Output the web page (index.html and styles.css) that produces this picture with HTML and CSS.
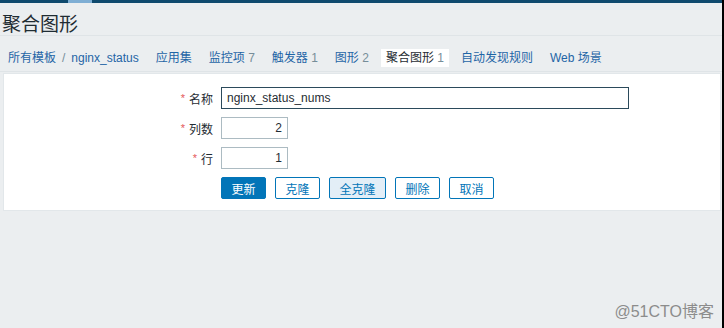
FILE: index.html
```html
<!DOCTYPE html>
<html lang="zh-CN">
<head>
    <meta charset="UTF-8">
    <meta name="viewport" content="width=device-width, initial-scale=1.0">
    <title>聚合图形</title>
    <link rel="stylesheet" href="styles.css">
</head>
<body>
    <div class="screen">
        <div class="topbar"><span class="topbar-mark"></span></div>

        <h1 class="title">聚合图形</h1>

        <ul class="nav">
            <li class="nav-item"><a href="#">所有模板</a><span class="crumb-sep">/</span><a href="#">nginx_status</a></li>
            <li class="nav-item"><a href="#">应用集</a></li>
            <li class="nav-item"><a href="#">监控项</a> <span class="count">7</span></li>
            <li class="nav-item"><a href="#">触发器</a> <span class="count">1</span></li>
            <li class="nav-item"><a href="#">图形</a> <span class="count">2</span></li>
            <li class="nav-item selected"><span>聚合图形</span> <span class="count">1</span></li>
            <li class="nav-item"><a href="#">自动发现规则</a></li>
            <li class="nav-item"><a href="#">Web 场景</a></li>
        </ul>

        <div class="panel">
            <form class="form">
                <label class="label" for="name"><span class="req">*</span>名称</label>
                <div class="field"><input class="input input-name" id="name" type="text" value="nginx_status_nums"></div>

                <label class="label" for="hsize"><span class="req">*</span>列数</label>
                <div class="field"><input class="input input-num" id="hsize" type="text" value="2"></div>

                <label class="label" for="vsize"><span class="req">*</span>行</label>
                <div class="field"><input class="input input-num" id="vsize" type="text" value="1"></div>

                <div class="buttons">
                    <button type="button" class="btn btn-main">更新</button>
                    <button type="button" class="btn">克隆</button>
                    <button type="button" class="btn btn-hover">全克隆</button>
                    <button type="button" class="btn">删除</button>
                    <button type="button" class="btn">取消</button>
                </div>
            </form>
        </div>

        <div class="watermark">@51CTO博客</div>
    </div>
</body>
</html>
```

FILE: styles.css
```css
html, body {
    margin: 0;
    padding: 0;
}

body {
    font-family: "Liberation Sans", "Noto Sans CJK SC", sans-serif;
    font-size: 12px;
    color: #1f2c33;
    background: #000;
}

.screen {
    position: relative;
    width: 722px;
    height: 328px;
    background: #ebeef0;
    overflow: hidden;
}

.topbar {
    height: 3px;
    background: #0f4a6e;
}

.topbar-mark {
    display: block;
    margin-left: 68px;
    width: 24px;
    height: 3px;
    background: #7eaed4;
}

.title {
    margin: 0;
    height: 33px;
    box-sizing: border-box;
    padding: 6px 0 0 2px;
    display: flex;
    align-items: center;
    font-size: 19px;
    font-weight: normal;
    color: #1f2c33;
    border-bottom: 1px solid #dfe4e7;
}

.nav {
    list-style: none;
    margin: 0;
    padding: 8px 0 0 3px;
    height: 36px;
    box-sizing: border-box;
    display: flex;
    align-items: center;
    border-bottom: 1px solid #dfe4e7;
}

.nav-item {
    padding: 0 5px;
    margin-right: 7px;
    line-height: 18px;
    white-space: nowrap;
}

.nav-item a {
    color: #1f65a6;
    text-decoration: none;
}

.nav-item .count {
    color: #768d99;
}

.crumb-sep {
    color: #768d99;
    margin: 0 6px;
}

.nav-item.selected {
    background: #fff;
    color: #1f2c33;
}

.panel {
    margin: 1px 1px 0 3px;
    background: #fff;
    border: 1px solid #e2e7ea;
}

.form {
    display: grid;
    grid-template-columns: 209px auto;
    column-gap: 8px;
    row-gap: 8px;
    padding: 13px 0 11px;
}

.label {
    display: flex;
    justify-content: flex-end;
    align-items: center;
    height: 22px;
    color: #1f2c33;
}

.req {
    color: #e45959;
    font-size: 11px;
    margin-right: 4px;
}

.field {
    display: flex;
    align-items: center;
}

.input {
    height: 22px;
    box-sizing: border-box;
    border: 1px solid #acbbc2;
    padding: 0 5px;
    font-family: inherit;
    font-size: 12px;
    color: #1f2c33;
    background: #fff;
    outline: none;
}

.input-name {
    width: 408px;
    border-color: #2b4a5b;
}

.input-num {
    width: 67px;
    text-align: right;
}

.buttons {
    grid-column: 2;
    display: flex;
    gap: 9px;
}

.btn {
    height: 22px;
    box-sizing: border-box;
    padding: 0 9.5px;
    border: 1px solid #0275b8;
    border-radius: 2px;
    background: #fff;
    color: #0275b8;
    font-family: inherit;
    font-size: 12px;
    cursor: pointer;
}

.btn-main {
    background: #0275b8;
    color: #fff;
}

.btn-hover {
    background: #e3eef7;
}

.watermark {
    position: absolute;
    right: 8px;
    bottom: 6px;
    font-size: 16px;
    color: #8c8c8c;
}
```
